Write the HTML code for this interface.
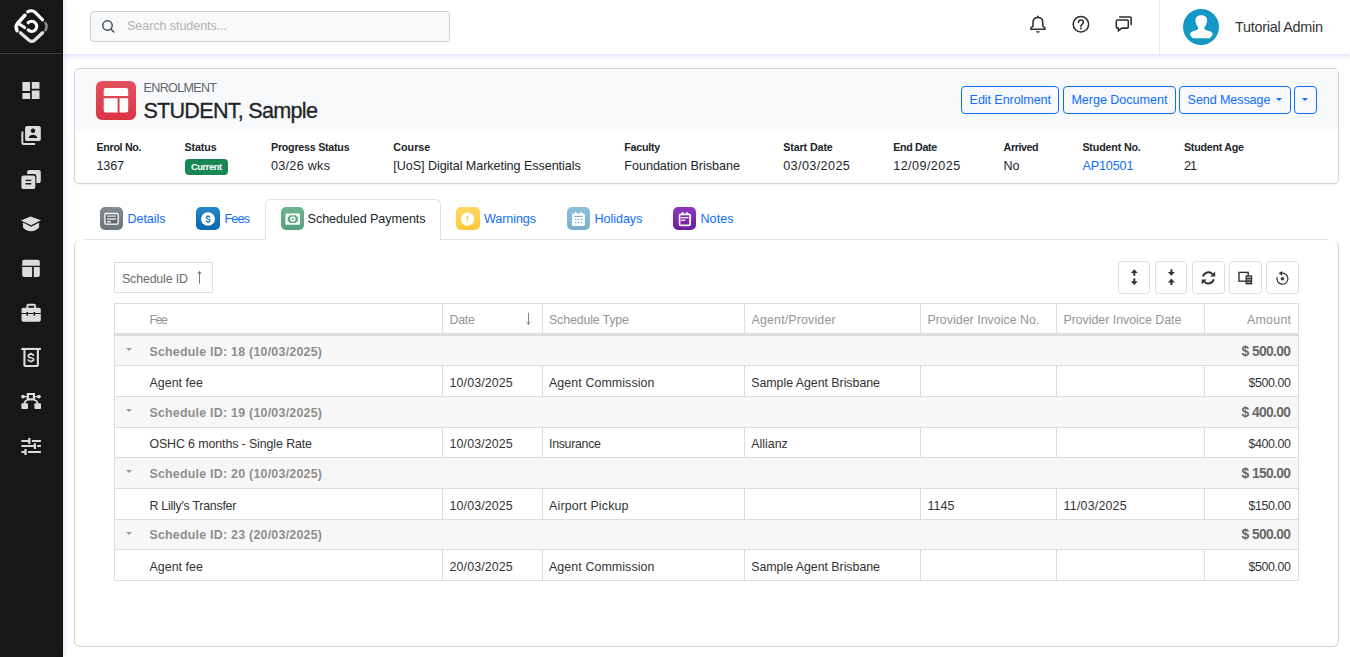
<!DOCTYPE html>
<html lang="en">
<head>
<meta charset="utf-8">
<title>Enrolment - STUDENT, Sample</title>
<style>
*{box-sizing:border-box;margin:0;padding:0}
html,body{width:1350px;height:657px;overflow:hidden;background:#fff}
body{font-family:"Liberation Sans",sans-serif;color:#212529;position:relative;font-size:12.6px}
.t{position:absolute;white-space:pre;line-height:1;z-index:5}
svg{position:absolute;overflow:visible}
/* sidebar */
#side{position:absolute;left:0;top:0;width:63px;height:657px;background:#171717;z-index:3;box-shadow:1px 0 6px rgba(115,115,240,.24)}
#side .div{position:absolute;left:0;top:53px;width:62px;height:1px;background:#3d3d3d}
/* topbar */
#top{position:absolute;left:63px;top:0;width:1287px;height:54px;background:#fff;box-shadow:0 1px 6px rgba(115,115,240,.30);z-index:2}
#search{position:absolute;left:27px;top:11px;width:360px;height:31px;border:1px solid #cfcfcf;border-radius:4px;background:#f8f9fa}
#vdiv{position:absolute;left:1096px;top:0;width:1px;height:54px;background:#ececec}
#avatar{position:absolute;left:1119.7px;top:8.5px;width:36.6px;height:36.4px;border-radius:50%;background:#1499c6;overflow:hidden}
/* card */
#card{position:absolute;left:74px;top:68px;width:1265px;height:116px;border:1px solid #d3d3d3;border-radius:5px;background:#fff;overflow:hidden;box-shadow:0 1px 2px rgba(0,0,0,.06)}
#card .hd{position:absolute;left:0;top:0;width:100%;height:62px;background:#f8f9fa}
#eicon{position:absolute;left:96px;top:80.7px;width:40px;height:39.6px;border-radius:6px;background:linear-gradient(180deg,#e2505f 0%,#dc3545 100%)}
#badge{position:absolute;left:185px;top:159px;width:43px;height:16px;border-radius:4px;background:#198754}
.btn{position:absolute;top:86px;height:27.6px;border:1px solid #0d6efd;border-radius:4px;background:transparent}
/* tabs */
.ticon{position:absolute;top:206.8px;width:23.3px;height:23.3px;border-radius:5px}
#tabline{position:absolute;left:85px;top:239px;width:1243px;height:1px;background:#dee2e6}
#atab{position:absolute;left:265px;top:199px;width:176px;height:41px;border:1px solid #dee2e6;border-bottom:0;border-radius:6px 6px 0 0;background:#fff}
#panel{position:absolute;left:74px;top:239.6px;width:1265px;height:407px;border:1px solid #d3d3d3;border-top:0;border-radius:6px}
/* grid */
#sbox{position:absolute;left:114px;top:262px;width:99px;height:31px;border:1px solid #ddd;background:#fff}
.tb{position:absolute;top:261.2px;width:32.4px;height:32.4px;border:1px solid #ddd;border-radius:3.6px;background:#fff}
#grid{position:absolute;left:114px;top:303px;width:1185px;height:278px;border:1px solid #ddd;background:#fff;overflow:hidden}
.grp{position:absolute;left:0;width:1183px;background:#f7f7f7;height:30.6px}
.vl{position:absolute;width:1px;background:#ddd}
.hl{position:absolute;left:0;width:1183px;height:1px;background:#ddd}
.car{position:absolute;width:0;height:0;border-left:3px solid transparent;border-right:3px solid transparent;border-top:3.5px solid #999}
</style>
</head>
<body>

<!-- SIDEBAR -->
<div id="side">
  <div class="div"></div>
<svg width="63" height="657" viewBox="0 0 63 657" style="left:0;top:0">
 <!-- logo -->
 <g fill="none" stroke-linecap="round" stroke-linejoin="round" stroke-width="3.1">
  <path d="M27.6 11.9 Q31.9 9.3 35.2 12.4 L42.6 19.9" stroke="#fff"/>
  <path d="M45.6 23.2 Q47.6 26.6 45.4 30.2" stroke="#8a8a8a" stroke-width="2.6"/>
  <path d="M20.4 32.7 L29 40.2 Q31.8 42.4 34.6 40.2 L42.6 32.7" stroke="#e2e2e2" stroke-width="3.3"/>
  <path d="M24.9 15.3 L17.4 23.5 Q15.2 26.4 17 30.6" stroke="#fff" stroke-width="3.5"/>
  <path d="M19.6 24.2 L24.7 27.6" stroke="#fff" stroke-width="3"/>
  <path d="M28.2 22.7 A5 5 0 1 1 28.2 29.9" stroke="#fff" stroke-width="3.2"/>
 </g>
 <g fill="#dcdcdc">
  <!-- dashboard -->
  <path d="M22.4 82h7.7v9.1h-7.7zM31.8 82h7.7v6.8h-7.7zM22.4 93h7.7v5.9h-7.7zM31.8 90.4h7.7v8.5h-7.7z"/>
  <!-- switch account -->
  <path d="M21.4 131.6h1.9v11.4h11.8v1.9H23.3a1.9 1.9 0 0 1-1.9-1.9z"/>
  <path fill-rule="evenodd" d="M27 125.9h11.9a1.9 1.9 0 0 1 1.9 1.9v11.4a1.9 1.9 0 0 1-1.9 1.9H27a1.9 1.9 0 0 1-1.9-1.9v-11.4a1.9 1.9 0 0 1 1.9-1.9zM33 128.6a2.2 2.2 0 1 0 0 4.4a2.2 2.2 0 1 0 0-4.4zM28.6 137.9h8.8c-0.4-2-2.6-3.1-4.4-3.1s-4 1.1-4.4 3.1z"/>
  <!-- stacked -->
  <path d="M29 169.9h9.6a2.2 2.2 0 0 1 2.2 2.2v8.8a2.2 2.2 0 0 1-2.2 2.2h-2.2v-6.6a2.4 2.4 0 0 0-2.4-2.4h-6.9v-2a2.2 2.2 0 0 1 1.9-2.2z"/>
  <path fill-rule="evenodd" d="M23.6 175.4h9.5a2.2 2.2 0 0 1 2.2 2.2v9.3a2.2 2.2 0 0 1-2.2 2.2h-9.5a2.2 2.2 0 0 1-2.2-2.2v-9.3a2.2 2.2 0 0 1 2.2-2.2zM25.5 179.7h5.8v1.4h-5.8zM25.5 183h5.8v1.4h-5.8z"/>
  <!-- school -->
  <path d="M30.6 216.6L41 220.2L31.2 225.2L20.9 220.4z"/>
  <path d="M23 222.6L31.2 226.8L39.1 222.7V227.6Q35.8 231.4 31 231.3Q26 231.2 23 227.6z"/>
  <!-- layout -->
  <path d="M24.2 259.7h13.6a2 2 0 0 1 2 2v4.1H22.2v-4.1a2 2 0 0 1 2-2zM22.2 267.1h9.9v10h-7.9a2 2 0 0 1-2-2zM33.8 267.1h6v8a2 2 0 0 1-2 2h-4z"/>
  <!-- briefcase -->
  <path fill-rule="evenodd" d="M26.4 307.7v-2a1.9 1.9 0 0 1 1.9-1.9h5.8a1.9 1.9 0 0 1 1.9 1.9v2h3a1.8 1.8 0 0 1 1.8 1.8v3.6H35.2v-1.2h-1.6v1.2h-5.5v-1.2h-1.6v1.2H21.5v-3.6a1.8 1.8 0 0 1 1.8-1.8zM28.3 305.8v1.9h5.8v-1.9z"/>
  <path d="M21.5 313.9h5v1.9h1.6v-1.9h5.5v1.9h1.6v-1.9h5.6v6.1a1.8 1.8 0 0 1-1.8 1.8H23.3a1.8 1.8 0 0 1-1.8-1.8z"/>
  <!-- dollar box -->
  <path d="M21.3 347.9h19.6v2.1H21.3z"/>
  <path fill-rule="evenodd" d="M23.4 350h15.5v15.2a1.8 1.8 0 0 1-1.8 1.8H25.2a1.8 1.8 0 0 1-1.8-1.8zM25.5 350v14.9h11.3V350z"/>
  <!-- bezier -->
  <path fill-rule="evenodd" d="M26.7 392.9h8.4v7.5h-8.4zM29 395.1v3.1h3.8v-3.1z"/>
  <circle cx="23" cy="396.6" r="1.9"/><circle cx="38.9" cy="396.6" r="1.9"/>
  <path d="M23 395.9h4v1.4h-4zM35 395.9h4v1.4h-4z"/>
  <rect x="21.4" y="403.3" width="6.6" height="5.8" rx="1"/><rect x="34.4" y="403.3" width="6.6" height="5.8" rx="1"/>
  <!-- tune -->
  <path d="M21.4 440h6.8v-2h2.2v6h-2.2v-2h-6.8zM31.8 440h9.1v2h-9.1z"/>
  <path d="M21.4 445.1h12.4v-1.8h2.2v5.8h-2.2v-2h-12.4zM37.2 445.1h3.7v2h-3.7z"/>
  <path d="M21.4 450.9h3v-2h2.2v6h-2.2v-2h-3zM28 450.9h12.9v2H28z"/>
 </g>
 <g fill="none" stroke="#dcdcdc" stroke-width="1.8">
  <path d="M27.4 400Q24.3 401 24.5 403.8M34.4 400Q37.7 401 37.5 403.8"/>
 </g>
 <path d="M34 355.7Q33.7 353.7 30.9 353.7Q27.9 353.7 27.9 355.7Q27.9 357.2 30.9 357.7Q34.1 358.2 34.1 359.9Q34.1 361.7 30.9 361.7Q28 361.7 27.6 359.6M30.9 352v1.6M30.9 361.7v1.5" fill="none" stroke="#dcdcdc" stroke-width="1.85" transform="translate(31 357.6) scale(0.88) translate(-31 -357.6)"/>
</svg>

</div>

<!-- TOPBAR -->
<div id="top">
  <div id="search"></div>
  <div id="vdiv"></div>
  <div id="avatar"><svg width="36.6" height="36.4" viewBox="1182.7 8.5 36.6 36.4" style="left:0;top:0">
 <path fill="#fff" d="M1200.9 14.8 C1196.6 14.8 1195 17.4 1195.2 20.4 C1195.4 23 1196.6 25 1197.6 26.6 C1198.2 27.6 1198 28.8 1197 29.3 C1195.4 30.2 1192 30.6 1190.4 31.8 L1189.7 34.4 L1192.6 37.8 H1209.4 L1212.3 34.4 L1211.6 31.8 C1210 30.6 1206.6 30.2 1205 29.3 C1204 28.8 1203.8 27.6 1204.4 26.6 C1205.4 25 1206.6 23 1206.8 20.4 C1207 17.4 1205.2 14.8 1200.9 14.8Z"/>
</svg>
</div>
<svg width="1350" height="54" viewBox="0 0 1350 54" style="left:-63px;top:0">
 <g fill="none" stroke="#3f4a54" stroke-width="1.45" stroke-linecap="round">
  <circle cx="107.5" cy="25.5" r="4.7"/><path d="M111 29.2L113.8 32"/>
 </g>
 <g fill="none" stroke="#2e2e2e" stroke-width="1.55" stroke-linejoin="round" stroke-linecap="round">
  <!-- bell -->
  <path d="M1037.9 17.4 C1034.4 17.4 1033 20 1033 22.6 V26.2 L1030.8 28 V29.3 H1045 V28 L1042.8 26.2 V22.6 C1042.8 20 1041.4 17.4 1037.9 17.4Z"/>
  <path d="M1037.9 16.2V17.2"/>
  <!-- help -->
  <circle cx="1080.9" cy="24.3" r="7.7"/>
  <path d="M1078.4 22.4 Q1078.5 20 1080.9 20 Q1083.4 20 1083.4 22.2 Q1083.4 23.4 1082 24.4 Q1080.9 25.2 1080.9 26.4"/>
  <!-- chat -->
  <path d="M1117.4 20H1127.2Q1128.3 20 1128.3 21.1V27Q1128.3 28.1 1127.2 28.1H1121.6L1118.4 31V28.1H1117.4Q1116.3 28.1 1116.3 27V21.1Q1116.3 20 1117.4 20Z"/>
  <path d="M1119.6 16.9H1130Q1131.2 16.9 1131.2 18.1V24.6"/>
 </g>
 <path d="M1036 31.2h3.9q-0.4 1.5-1.95 1.5t-1.95-1.5z" fill="#2e2e2e"/>
 <circle cx="1080.9" cy="28.5" r="0.95" fill="#2e2e2e"/>
</svg>

</div>

<!-- CARD -->
<div id="card"><div class="hd"></div></div>
<div id="eicon"><svg width="40" height="39.6" viewBox="96 80.7 40 39.6" style="left:0;top:0">
 <path fill="#fff" d="M105.7 87.7h20.5a2 2 0 0 1 2 2v6H103.7v-6a2 2 0 0 1 2-2zM103.7 97.9h13.9v14.3h-11.9a2 2 0 0 1-2-2zM119.6 97.9h8.6v12.3a2 2 0 0 1-2 2h-6.6z"/>
</svg>
</div>
<div id="badge"></div>
<div class="btn" style="left:961px;width:98px"></div>
<div class="btn" style="left:1063px;width:113px"></div>
<div class="btn" style="left:1179px;width:112px"></div>
<div class="btn" style="left:1294px;width:23px"></div>
<div class="car" style="left:1276.2px;top:98.2px;border-top-color:#0d6efd"></div>
<div class="car" style="left:1302px;top:98.2px;border-top-color:#0d6efd"></div>

<!-- TABS -->
<div id="panel"></div>
<div id="tabline"></div>
<div id="atab"></div>
<div class="ticon" style="left:100px;background:linear-gradient(180deg,#838b92,#6c757d)"></div>
<div class="ticon" style="left:196.4px;background:linear-gradient(180deg,#2388cb,#0b66ab)"></div>
<div class="ticon" style="left:281px;background:linear-gradient(180deg,#6db392,#569f7c)"></div>
<div class="ticon" style="left:456.4px;background:linear-gradient(180deg,#ffd763,#ffc83a)"></div>
<div class="ticon" style="left:567px;background:linear-gradient(180deg,#8cc0d8,#78b0cd)"></div>
<div class="ticon" style="left:673px;background:linear-gradient(180deg,#8d38bb,#6d1d9e)"></div>
<svg width="700" height="30" viewBox="0 205 700 30" style="left:0;top:205px">
 <!-- details -->
 <rect x="104.9" y="213.5" width="13.2" height="10.6" rx="1.2" fill="#5f676e" stroke="#fff" stroke-width="1.3"/>
 <path d="M107 216.2h9M107 219h9" stroke="#e4e6e8" stroke-width="1.3"/><path d="M107 221.7h4" stroke="#fff" stroke-width="1.3"/>
 <!-- fees -->
 <ellipse cx="208" cy="219" rx="7" ry="6.7" fill="#fff"/>
 <path d="M209.9 217.6Q209.7 216.3 208 216.3Q206.2 216.3 206.2 217.6Q206.2 218.6 208 219Q210 219.4 210 220.6Q210 221.9 208 221.9Q206.2 221.9 206 220.5M208 215v1.2M208 221.9v1.3" fill="none" stroke="#1275ba" stroke-width="1.25"/>
 <!-- scheduled -->
 <rect x="285.5" y="213.5" width="14.4" height="11.2" fill="#fff"/>
 <path d="M289.4 215.2h6.8q0 1.7 1.8 1.7v4.4q-1.8 0-1.8 1.7h-6.8q0-1.7-1.8-1.7v-4.4q1.8 0 1.8-1.7z" fill="#62a986"/>
 <circle cx="292.8" cy="219.1" r="2.7" fill="#fff"/><circle cx="292.8" cy="219.1" r="1.1" fill="#62a986"/>
 <!-- warnings -->
 <circle cx="467.5" cy="219.1" r="6.7" fill="#fff"/>
 <path d="M467.5 215.9v4.1" stroke="#ffcf4c" stroke-width="1.4"/><circle cx="467.5" cy="221.6" r="0.8" fill="#ffcf4c"/>
 <!-- holidays -->
 <rect x="572" y="213.5" width="12.9" height="12.6" rx="1.4" fill="#fff"/>
 <path d="M575.7 212v2M581.3 212v2" stroke="#fff" stroke-width="1.5"/>
 <path d="M574 216.4h9" stroke="#7fb6d1" stroke-width="1.1"/>
 <g fill="#7aa8dc"><rect x="575" y="218.9" width="1.3" height="1.3"/><rect x="577.9" y="218.9" width="1.3" height="1.3"/><rect x="580.8" y="218.9" width="1.3" height="1.3"/><rect x="575" y="221.9" width="1.3" height="1.3"/><rect x="577.9" y="221.9" width="1.3" height="1.3"/><rect x="580.8" y="221.9" width="1.3" height="1.3"/></g>
 <!-- notes -->
 <rect x="679.6" y="214.3" width="10.5" height="11" rx="1" fill="none" stroke="#fff" stroke-width="1.7"/>
 <path d="M682.6 212v2M687 212v2" stroke="#fff" stroke-width="1.5"/>
 <path d="M681.2 217.7h7.4" stroke="#fff" stroke-width="1.3"/><path d="M681.2 220.3h4" stroke="#fff" stroke-width="1.3"/>
</svg>


<!-- GRID -->
<div id="sbox"></div>
<div class="tb" style="left:1118.2px;width:31.4px"></div>
<div class="tb" style="left:1155.3px;width:31.3px"></div>
<div class="tb" style="left:1192.3px"></div>
<div class="tb" style="left:1229.25px"></div>
<div class="tb" style="left:1266.2px"></div>
<svg width="200" height="40" viewBox="1110 258 200 40" style="left:1110px;top:258px">
 <g fill="#333">
  <path d="M1134.3 269.2l3.5 3.8h-2.5v2.7h-2v-2.7h-2.5zM1134.3 285l3.5-3.8h-2.5v-2.7h-2v2.7h-2.5z"/>
  <path d="M1171.4 275.8l3.5-3.8h-2.5v-2.7h-2v2.7h-2.5zM1171.4 278.6l3.5 3.8h-2.5v2.7h-2v-2.7h-2.5z"/>
  <path d="M1245.5 275.4h6.7v9h-6.7z"/>
  <circle cx="1282.4" cy="278.8" r="1.7"/>
  <path d="M1278.6 273.3l3.6-2.4v4.8z"/>
  <!-- sync arrows heads -->
  <path d="M1215.2 271.4v5h-5z"/><path d="M1201.7 284.4v-5h5z"/>
 </g>
 <g fill="none" stroke="#333">
  <rect x="1239" y="272.4" width="9.2" height="8.8" stroke-width="1.4"/>
  <path d="M1281.4 273.3A5.5 5.5 0 1 1 1277.2 277" stroke-width="1.2"/>
  <path d="M1203 276.6A5.6 5.6 0 0 1 1212.6 274.2" stroke-width="1.9"/>
  <path d="M1213.8 279.2A5.6 5.6 0 0 1 1204.2 281.6" stroke-width="1.9"/>
 </g>
 <path d="M1246.8 277.4h4.1M1246.8 279.8h4.1M1246.8 282.2h4.1" stroke="#bbb" stroke-width="1.1"/>
</svg>
<svg width="450" height="60" viewBox="100 268 450 60" style="left:100px;top:268px;z-index:4">
 <g fill="none" stroke="#777" stroke-width="1" stroke-linecap="round" stroke-linejoin="round">
  <path d="M199.5 283.2v-11.4M197.8 273.8l1.7-2.2l1.7 2.2"/>
  <path d="M528.5 313.2v11M526.8 322.2l1.7 2.2l1.7-2.2" stroke="#858585"/>
 </g>
</svg>

<div id="grid">
<div class="grp" style="top:32px;height:29px"></div>
<div class="grp" style="top:93px;height:30px"></div>
<div class="grp" style="top:154px;height:30px"></div>
<div class="grp" style="top:216px;height:29px"></div>
<div class="hl" style="top:29px;height:3px"></div>
<div class="hl" style="top:61px"></div>
<div class="hl" style="top:92px"></div>
<div class="hl" style="top:123px"></div>
<div class="hl" style="top:153px"></div>
<div class="hl" style="top:184px"></div>
<div class="hl" style="top:215px"></div>
<div class="hl" style="top:245px"></div>
<div class="vl" style="left:327px;top:0;height:29px"></div>
<div class="vl" style="left:327px;top:62px;height:30px"></div>
<div class="vl" style="left:327px;top:124px;height:29px"></div>
<div class="vl" style="left:327px;top:185px;height:30px"></div>
<div class="vl" style="left:327px;top:246px;height:30px"></div>
<div class="vl" style="left:427px;top:0;height:29px"></div>
<div class="vl" style="left:427px;top:62px;height:30px"></div>
<div class="vl" style="left:427px;top:124px;height:29px"></div>
<div class="vl" style="left:427px;top:185px;height:30px"></div>
<div class="vl" style="left:427px;top:246px;height:30px"></div>
<div class="vl" style="left:629px;top:0;height:29px"></div>
<div class="vl" style="left:629px;top:62px;height:30px"></div>
<div class="vl" style="left:629px;top:124px;height:29px"></div>
<div class="vl" style="left:629px;top:185px;height:30px"></div>
<div class="vl" style="left:629px;top:246px;height:30px"></div>
<div class="vl" style="left:805px;top:0;height:29px"></div>
<div class="vl" style="left:805px;top:62px;height:30px"></div>
<div class="vl" style="left:805px;top:124px;height:29px"></div>
<div class="vl" style="left:805px;top:185px;height:30px"></div>
<div class="vl" style="left:805px;top:246px;height:30px"></div>
<div class="vl" style="left:941px;top:0;height:29px"></div>
<div class="vl" style="left:941px;top:62px;height:30px"></div>
<div class="vl" style="left:941px;top:124px;height:29px"></div>
<div class="vl" style="left:941px;top:185px;height:30px"></div>
<div class="vl" style="left:941px;top:246px;height:30px"></div>
<div class="vl" style="left:1089px;top:0;height:29px"></div>
<div class="vl" style="left:1089px;top:62px;height:30px"></div>
<div class="vl" style="left:1089px;top:124px;height:29px"></div>
<div class="vl" style="left:1089px;top:185px;height:30px"></div>
<div class="vl" style="left:1089px;top:246px;height:30px"></div>
<div class="vl" style="left:1089px;top:32px;height:29px;background:#fbfbfb"></div>
<div class="car" style="left:11px;top:44px"></div>
<div class="vl" style="left:1089px;top:93px;height:30px;background:#fbfbfb"></div>
<div class="car" style="left:11px;top:105px"></div>
<div class="vl" style="left:1089px;top:154px;height:30px;background:#fbfbfb"></div>
<div class="car" style="left:11px;top:166px"></div>
<div class="vl" style="left:1089px;top:216px;height:29px;background:#fbfbfb"></div>
<div class="car" style="left:11px;top:228px"></div>
</div>

<div class="t" style="top:20.33px;font-size:12.6px;color:#b2b2b2;letter-spacing:-0.089px;left:127.00px;">Search students...</div>
<div class="t" style="top:20.21px;font-size:14.4px;color:#333;letter-spacing:-0.266px;left:1235.00px;">Tutorial Admin</div>
<div class="t" style="top:82.33px;font-size:12.6px;color:#5f666d;letter-spacing:-0.710px;left:143.60px;">ENROLMENT</div>
<div class="t" style="top:99.92px;font-size:21.6px;color:#212529;letter-spacing:-0.735px;left:143.40px;-webkit-text-stroke:0.3px #212529;">STUDENT, Sample</div>
<div class="t" style="top:141.84px;font-size:10.7px;color:#212529;letter-spacing:-0.312px;font-weight:700;left:96.50px;">Enrol No.</div>
<div class="t" style="top:159.93px;font-size:12.6px;color:#212529;letter-spacing:-0.144px;left:96.50px;">1367</div>
<div class="t" style="top:141.84px;font-size:10.7px;color:#212529;letter-spacing:-0.134px;font-weight:700;left:184.60px;">Status</div>
<div class="t" style="top:141.84px;font-size:10.7px;color:#212529;letter-spacing:-0.241px;font-weight:700;left:271.00px;">Progress Status</div>
<div class="t" style="top:159.93px;font-size:12.6px;color:#212529;letter-spacing:0.287px;left:271.00px;">03/26 wks</div>
<div class="t" style="top:141.84px;font-size:10.7px;color:#212529;letter-spacing:0.034px;font-weight:700;left:393.30px;">Course</div>
<div class="t" style="top:159.93px;font-size:12.6px;color:#212529;letter-spacing:-0.069px;left:393.30px;">[UoS] Digital Marketing Essentials</div>
<div class="t" style="top:141.84px;font-size:10.7px;color:#212529;letter-spacing:-0.237px;font-weight:700;left:624.30px;">Faculty</div>
<div class="t" style="top:159.93px;font-size:12.6px;color:#212529;letter-spacing:-0.030px;left:624.30px;">Foundation Brisbane</div>
<div class="t" style="top:141.84px;font-size:10.7px;color:#212529;letter-spacing:-0.098px;font-weight:700;left:783.20px;">Start Date</div>
<div class="t" style="top:159.93px;font-size:12.6px;color:#212529;letter-spacing:0.397px;left:783.20px;">03/03/2025</div>
<div class="t" style="top:141.84px;font-size:10.7px;color:#212529;letter-spacing:-0.333px;font-weight:700;left:893.20px;">End Date</div>
<div class="t" style="top:159.93px;font-size:12.6px;color:#212529;letter-spacing:0.441px;left:893.20px;">12/09/2025</div>
<div class="t" style="top:141.84px;font-size:10.7px;color:#212529;letter-spacing:-0.406px;font-weight:700;left:1003.60px;">Arrived</div>
<div class="t" style="top:159.93px;font-size:12.6px;color:#212529;letter-spacing:-0.109px;left:1003.60px;">No</div>
<div class="t" style="top:141.84px;font-size:10.7px;color:#212529;letter-spacing:-0.157px;font-weight:700;left:1082.40px;">Student No.</div>
<div class="t" style="top:159.93px;font-size:12.6px;color:#0d6efd;letter-spacing:-0.138px;left:1082.40px;">AP10501</div>
<div class="t" style="top:141.84px;font-size:10.7px;color:#212529;letter-spacing:-0.255px;font-weight:700;left:1184.00px;">Student Age</div>
<div class="t" style="top:159.93px;font-size:12.6px;color:#212529;letter-spacing:-1.016px;left:1184.00px;">21</div>
<div class="t" style="top:162.83px;font-size:9.3px;color:#fff;letter-spacing:-0.430px;font-weight:700;left:191.00px;">Current</div>
<div class="t" style="top:93.53px;font-size:12.6px;color:#0d6efd;letter-spacing:-0.093px;left:969.60px;">Edit Enrolment</div>
<div class="t" style="top:93.53px;font-size:12.6px;color:#0d6efd;letter-spacing:-0.046px;left:1071.40px;">Merge Document</div>
<div class="t" style="top:93.53px;font-size:12.6px;color:#0d6efd;letter-spacing:-0.111px;left:1187.60px;">Send Message</div>
<div class="t" style="top:212.93px;font-size:12.6px;color:#0d6efd;letter-spacing:-0.050px;left:127.40px;">Details</div>
<div class="t" style="top:212.93px;font-size:12.6px;color:#0d6efd;letter-spacing:-0.800px;left:224.40px;">Fees</div>
<div class="t" style="top:212.93px;font-size:12.6px;color:#212529;letter-spacing:-0.060px;left:307.60px;">Scheduled Payments</div>
<div class="t" style="top:212.93px;font-size:12.6px;color:#0d6efd;letter-spacing:-0.105px;left:484.00px;">Warnings</div>
<div class="t" style="top:212.93px;font-size:12.6px;color:#0d6efd;letter-spacing:-0.042px;left:594.40px;">Holidays</div>
<div class="t" style="top:212.93px;font-size:12.6px;color:#0d6efd;letter-spacing:0.073px;left:700.40px;">Notes</div>
<div class="t" style="top:272.50px;font-size:12.4px;color:#6b6b6b;letter-spacing:-0.152px;left:122.00px;">Schedule ID</div>
<div class="t" style="top:313.70px;font-size:12.4px;color:#959595;letter-spacing:-1.380px;left:149.40px;">Fee</div>
<div class="t" style="top:313.70px;font-size:12.4px;color:#959595;letter-spacing:-0.196px;left:449.40px;">Date</div>
<div class="t" style="top:313.70px;font-size:12.4px;color:#959595;letter-spacing:-0.146px;left:549.00px;">Schedule Type</div>
<div class="t" style="top:313.70px;font-size:12.4px;color:#959595;letter-spacing:0.156px;left:751.60px;">Agent/Provider</div>
<div class="t" style="top:313.70px;font-size:12.4px;color:#959595;letter-spacing:0.022px;left:927.40px;">Provider Invoice No.</div>
<div class="t" style="top:313.70px;font-size:12.4px;color:#959595;letter-spacing:-0.023px;left:1063.40px;">Provider Invoice Date</div>
<div class="t" style="top:313.70px;font-size:12.4px;color:#959595;letter-spacing:0.259px;right:58.74px;">Amount</div>
<div class="t" style="top:345.70px;font-size:12.4px;color:#8e8e8e;letter-spacing:0.245px;font-weight:700;left:149.40px;">Schedule ID: 18 (10/03/2025)</div>
<div class="t" style="top:344.62px;font-size:13.8px;color:#686868;letter-spacing:-0.617px;font-weight:700;right:59.62px;">$ 500.00</div>
<div class="t" style="top:377.10px;font-size:12.4px;color:#333;letter-spacing:0.067px;left:149.40px;">Agent fee</div>
<div class="t" style="top:377.10px;font-size:12.4px;color:#333;letter-spacing:0.109px;left:449.60px;">10/03/2025</div>
<div class="t" style="top:377.10px;font-size:12.4px;color:#333;letter-spacing:0.094px;left:549.00px;">Agent Commission</div>
<div class="t" style="top:377.10px;font-size:12.4px;color:#333;letter-spacing:-0.035px;left:751.20px;">Sample Agent Brisbane</div>
<div class="t" style="top:377.10px;font-size:12.4px;color:#333;letter-spacing:-0.399px;right:59.40px;">$500.00</div>
<div class="t" style="top:406.90px;font-size:12.4px;color:#8e8e8e;letter-spacing:0.245px;font-weight:700;left:149.40px;">Schedule ID: 19 (10/03/2025)</div>
<div class="t" style="top:405.82px;font-size:13.8px;color:#686868;letter-spacing:-0.617px;font-weight:700;right:59.62px;">$ 400.00</div>
<div class="t" style="top:438.30px;font-size:12.4px;color:#333;letter-spacing:-0.103px;left:149.40px;">OSHC 6 months - Single Rate</div>
<div class="t" style="top:438.30px;font-size:12.4px;color:#333;letter-spacing:0.109px;left:449.60px;">10/03/2025</div>
<div class="t" style="top:438.30px;font-size:12.4px;color:#333;letter-spacing:-0.303px;left:549.00px;">Insurance</div>
<div class="t" style="top:438.30px;font-size:12.4px;color:#333;letter-spacing:0.014px;left:751.20px;">Allianz</div>
<div class="t" style="top:438.30px;font-size:12.4px;color:#333;letter-spacing:-0.399px;right:59.40px;">$400.00</div>
<div class="t" style="top:468.10px;font-size:12.4px;color:#8e8e8e;letter-spacing:0.245px;font-weight:700;left:149.40px;">Schedule ID: 20 (10/03/2025)</div>
<div class="t" style="top:467.02px;font-size:13.8px;color:#686868;letter-spacing:-0.617px;font-weight:700;right:59.62px;">$ 150.00</div>
<div class="t" style="top:499.50px;font-size:12.4px;color:#333;letter-spacing:-0.246px;left:149.40px;">R Lilly's Transfer</div>
<div class="t" style="top:499.50px;font-size:12.4px;color:#333;letter-spacing:0.109px;left:449.60px;">10/03/2025</div>
<div class="t" style="top:499.50px;font-size:12.4px;color:#333;letter-spacing:0.181px;left:549.00px;">Airport Pickup</div>
<div class="t" style="top:499.50px;font-size:12.4px;color:#333;letter-spacing:0.115px;left:927.40px;">1145</div>
<div class="t" style="top:499.50px;font-size:12.4px;color:#333;letter-spacing:0.212px;left:1063.60px;">11/03/2025</div>
<div class="t" style="top:499.50px;font-size:12.4px;color:#333;letter-spacing:-0.399px;right:59.40px;">$150.00</div>
<div class="t" style="top:529.30px;font-size:12.4px;color:#8e8e8e;letter-spacing:0.245px;font-weight:700;left:149.40px;">Schedule ID: 23 (20/03/2025)</div>
<div class="t" style="top:528.22px;font-size:13.8px;color:#686868;letter-spacing:-0.617px;font-weight:700;right:59.62px;">$ 500.00</div>
<div class="t" style="top:560.70px;font-size:12.4px;color:#333;letter-spacing:0.067px;left:149.40px;">Agent fee</div>
<div class="t" style="top:560.70px;font-size:12.4px;color:#333;letter-spacing:0.109px;left:449.60px;">20/03/2025</div>
<div class="t" style="top:560.70px;font-size:12.4px;color:#333;letter-spacing:0.094px;left:549.00px;">Agent Commission</div>
<div class="t" style="top:560.70px;font-size:12.4px;color:#333;letter-spacing:-0.035px;left:751.20px;">Sample Agent Brisbane</div>
<div class="t" style="top:560.70px;font-size:12.4px;color:#333;letter-spacing:-0.399px;right:59.40px;">$500.00</div>
</body>
</html>
